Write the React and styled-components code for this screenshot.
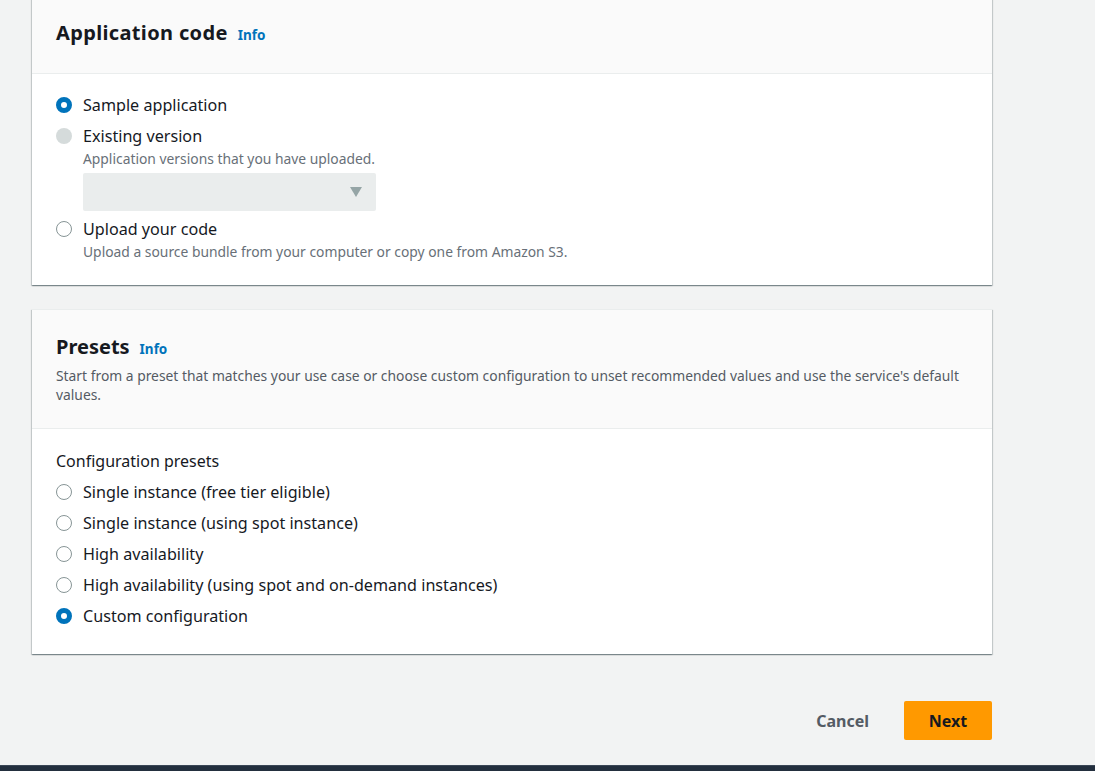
import React, { useState } from "react";
import styled, { createGlobalStyle } from "styled-components";

const GlobalStyle = createGlobalStyle`
    html, body {
        margin: 0;
        padding: 0;
        background: #f2f3f3;
        font-family: "Noto Sans", "Open Sans", Arial, sans-serif;
        color: #16191f;
    }
    * {
        box-sizing: border-box;
    }
`;

const Page = styled.div`
    display: flex;
    flex-direction: column;
    overflow: hidden;
    height: 771px;
`;

const Content = styled.main`
    display: flex;
    flex-direction: column;
    gap: 24px;
    width: 960px;
    margin-left: 32px;
    margin-top: -5px;
`;

const Card = styled.section`
    background: #fff;
    border-top: 1px solid #eaeded;
    box-shadow: 0 1px 1px 0 rgba(0, 28, 36, 0.3),
        1px 1px 1px 0 rgba(0, 28, 36, 0.15),
        -1px 1px 1px 0 rgba(0, 28, 36, 0.15);
`;

const CardHeader = styled.header`
    background: #fafafa;
    border-bottom: 1px solid #eaeded;
    padding: 23px 24px 24px;
`;

const Title = styled.h2`
    margin: 0;
    font-size: 20px;
    line-height: 28px;
    font-weight: 700;
    letter-spacing: ${(p) => p.$spacing || "0"};
    display: flex;
    align-items: baseline;
    gap: 10px;
`;

const InfoLink = styled.a`
    font-size: 13.5px;
    font-weight: 700;
    letter-spacing: 0;
    color: #0073bb;
    text-decoration: none;
    cursor: pointer;
`;

const HeaderDesc = styled.p`
    margin: 3px 0 0;
    font-size: 13.85px;
    line-height: 19px;
    color: #545b64;
`;

const CardBody = styled.div`
    padding: ${(p) => p.$pad || "20px 24px 23px"};
    display: flex;
    flex-direction: column;
`;

const GroupLabel = styled.div`
    font-size: 16px;
    line-height: 22px;
    margin-bottom: 9px;
`;

const RadioList = styled.div`
    display: flex;
    flex-direction: column;
    gap: 9px;
`;

const RadioItem = styled.label`
    display: grid;
    grid-template-columns: 16px 1fr;
    column-gap: 11px;
    cursor: ${(p) => (p.$disabled ? "default" : "pointer")};
`;

const Dot = styled.span`
    width: 16px;
    height: 16px;
    border-radius: 50%;
    margin-top: 3px;
    background: ${(p) => (p.$disabled ? "#d5dbdb" : "#fff")};
    border: ${(p) =>
        p.$checked
            ? "5px solid #0073bb"
            : p.$disabled
            ? "none"
            : "1.5px solid #879596"};
`;

const RadioText = styled.div`
    display: flex;
    flex-direction: column;
`;

const RadioLabel = styled.span`
    font-size: 16.15px;
    line-height: 22px;
`;

const RadioDesc = styled.span`
    font-size: 13.85px;
    line-height: 20px;
    color: #687078;
    margin-top: 2px;
`;

const FakeSelect = styled.div`
    width: 293px;
    height: 38px;
    margin-top: 4px;
    margin-bottom: -2px;
    background: #eaeded;
    border-radius: 2px;
    display: flex;
    align-items: center;
    justify-content: flex-end;
    padding-right: 14px;
`;

const Caret = styled.span`
    width: 0;
    height: 0;
    border-left: 6px solid transparent;
    border-right: 6px solid transparent;
    border-top: 10px solid #95a5a6;
`;

const Actions = styled.div`
    display: flex;
    justify-content: flex-end;
    align-items: center;
    gap: 15px;
    margin-top: 23px;
`;

const LinkButton = styled.button`
    border: none;
    background: transparent;
    font-family: inherit;
    font-size: 16px;
    font-weight: 700;
    color: #545b64;
    padding: 0 20px;
    height: 39px;
    cursor: pointer;
`;

const PrimaryButton = styled.button`
    border: none;
    background: #ff9900;
    border-radius: 2px;
    font-family: inherit;
    font-size: 16px;
    font-weight: 700;
    color: #16191f;
    width: 88px;
    height: 39px;
    cursor: pointer;
`;

const BottomBar = styled.footer`
    margin-top: 25px;
    height: 40px;
    background: #232f3e;
    border-top: 1px solid #3b4756;
`;

function Radio({ label, desc, checked, disabled, onSelect, children }) {
    return (
        <RadioItem $disabled={disabled} onClick={disabled ? undefined : onSelect}>
            <Dot $checked={checked} $disabled={disabled} />
            <RadioText>
                <RadioLabel>{label}</RadioLabel>
                {desc && <RadioDesc>{desc}</RadioDesc>}
                {children}
            </RadioText>
        </RadioItem>
    );
}

const presets = [
    "Single instance (free tier eligible)",
    "Single instance (using spot instance)",
    "High availability",
    "High availability (using spot and on-demand instances)",
    "Custom configuration",
];

export default function App() {
    const [code, setCode] = useState("sample");
    const [preset, setPreset] = useState(4);

    return (
        <Page>
            <GlobalStyle />
            <Content>
                <Card>
                    <CardHeader>
                        <Title $spacing="0.35px">
                            Application code <InfoLink>Info</InfoLink>
                        </Title>
                    </CardHeader>
                    <CardBody>
                        <RadioList>
                            <Radio
                                label="Sample application"
                                checked={code === "sample"}
                                onSelect={() => setCode("sample")}
                            />
                            <Radio
                                label="Existing version"
                                desc="Application versions that you have uploaded."
                                disabled
                            >
                                <FakeSelect>
                                    <Caret />
                                </FakeSelect>
                            </Radio>
                            <Radio
                                label="Upload your code"
                                desc="Upload a source bundle from your computer or copy one from Amazon S3."
                                checked={code === "upload"}
                                onSelect={() => setCode("upload")}
                            />
                        </RadioList>
                    </CardBody>
                </Card>

                <Card>
                    <CardHeader>
                        <Title>
                            Presets <InfoLink>Info</InfoLink>
                        </Title>
                        <HeaderDesc>
                            Start from a preset that matches your use case or
                            choose custom configuration to unset recommended
                            values and use the service's default values.
                        </HeaderDesc>
                    </CardHeader>
                    <CardBody $pad="21px 24px 27px">
                        <GroupLabel>Configuration presets</GroupLabel>
                        <RadioList>
                            {presets.map((p, i) => (
                                <Radio
                                    key={p}
                                    label={p}
                                    checked={preset === i}
                                    onSelect={() => setPreset(i)}
                                />
                            ))}
                        </RadioList>
                    </CardBody>
                </Card>

                <Actions>
                    <LinkButton>Cancel</LinkButton>
                    <PrimaryButton>Next</PrimaryButton>
                </Actions>
            </Content>
            <BottomBar />
        </Page>
    );
}
